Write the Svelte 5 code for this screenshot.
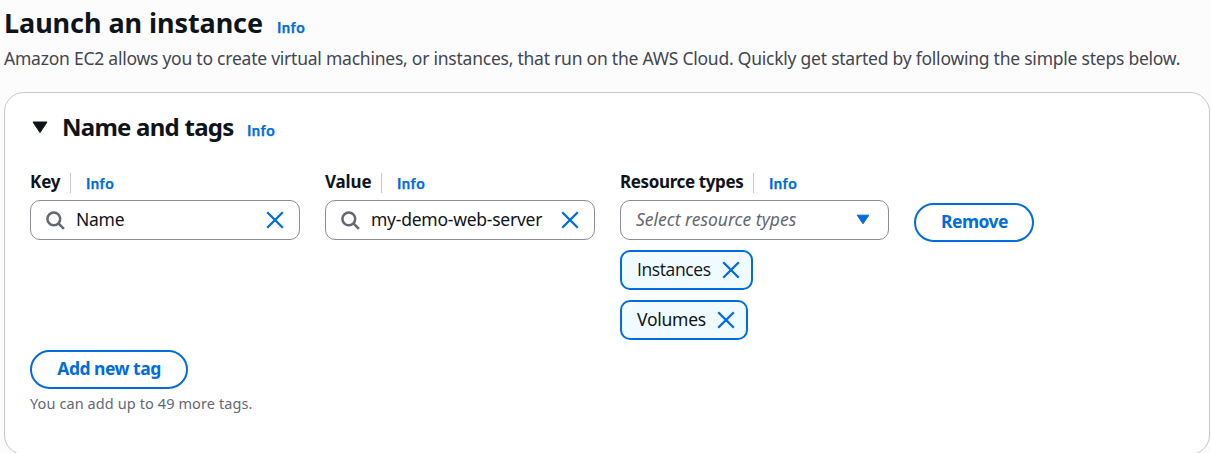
<script>
  const info = 'Info';
  const tokens = [
    { name: 'Instances', cls: 'instances' },
    { name: 'Volumes', cls: 'volumes' }
  ];
</script>

{#snippet cross()}
  <svg class="cross" width="18" height="18" viewBox="0 0 18 18" aria-hidden="true">
    <path d="M1.2 1.2 16.8 16.8M16.8 1.2 1.2 16.8" fill="none" stroke="#006ce0" stroke-width="2.3" />
  </svg>
{/snippet}

{#snippet search()}
  <svg class="search" width="19" height="19" viewBox="0 0 19 19" aria-hidden="true">
    <circle cx="7.8" cy="7.8" r="6.4" fill="none" stroke="#656871" stroke-width="2.5" />
    <path d="m12.2 12.2 5.7 5.7" fill="none" stroke="#656871" stroke-width="2.6" />
  </svg>
{/snippet}

{#snippet label(text, cls)}
  <div class="label"><b class={cls}>{text}</b><i class="rule"></i><a class="info">{info}</a></div>
{/snippet}

<main>
  <header>
    <h1><span>Launch an instance</span></h1>
    <a class="info">{info}</a>
  </header>
  <p class="intro"><span>Amazon EC2 allows you to create virtual machines, or instances, that run on the AWS Cloud. Quickly get started by following the simple steps below.</span></p>

  <section>
    <div class="title">
      <svg width="16" height="13" viewBox="0 0 16 13" aria-hidden="true"><path d="M1 1h14L8 11.6z" fill="#0f141a" stroke="#0f141a" stroke-linejoin="round" /></svg>
      <h2><span>Name and tags</span></h2>
      <a class="info">{info}</a>
    </div>

    <div class="grid">
      <div>
        {@render label('Key', 'key')}
        <div class="field">{@render search()}<span>Name</span>{@render cross()}</div>
      </div>
      <div>
        {@render label('Value', 'value')}
        <div class="field">{@render search()}<span>my-demo-web-server</span>{@render cross()}</div>
      </div>
      <div>
        {@render label('Resource types', 'types')}
        <div class="field select">
          <em>Select resource types</em>
          <svg width="14" height="12" viewBox="0 0 14 12" aria-hidden="true"><path d="M1.2 1.2h11.6L7 9.8z" fill="#006ce0" stroke="#006ce0" stroke-linejoin="round" /></svg>
        </div>
        {#each tokens as token}
          <div class="token {token.cls}"><span>{token.name}</span>{@render cross()}</div>
        {/each}
      </div>
      <button class="remove"><span>Remove</span></button>
    </div>

    <button class="add"><span>Add new tag</span></button>
    <p class="hint"><span>You can add up to 49 more tags.</span></p>
  </section>
</main>

<style>
  :global(body) { background: #fcfcfd; overflow: hidden; }
  main {
    box-sizing: border-box;
    height: 453px;
    padding: 6px 1px 0 4px;
    overflow: hidden;
    color: #0f141a;
    font: 17.5px/24px "Noto Sans", "Open Sans", sans-serif;
    font-stretch: 90%;
    letter-spacing: -0.25px;
    white-space: nowrap;
  }
  h1, h2, p { margin: 0; }
  header { display: flex; height: 34px; align-items: baseline; }
  h1 { width: 273px; font-size: 27px; line-height: 34px; font-weight: 700; letter-spacing: -0.07px; }
  .info { color: #006ce0; font-family: Lato, sans-serif; font-size: 14.8px; font-weight: 700; letter-spacing: 0.55px; -webkit-text-stroke: 0.25px #006ce0; }
  .intro { margin-top: 6px; color: #424650; height: 24px; letter-spacing: -0.235px; }
  section {
    box-sizing: border-box;
    height: 363px;
    margin-top: 22px;
    padding: 18px 25px 0;
    border: 1px solid #c6c6cd;
    border-radius: 20px;
    background: #fff;
  }
  .title { display: flex; height: 32px; align-items: baseline; }
  .title svg { margin: 0 14px 0 2px; position: relative; top: -2px; }
  h2 { width: 185px; font-size: 24px; line-height: 32px; font-weight: 700; letter-spacing: -0.75px; }
  .grid { display: grid; grid-template-columns: 270px 270px 269px 120px; column-gap: 25px; height: 180px; margin-top: 27px; align-items: start; }
  .label { display: flex; height: 24px; margin-bottom: 6px; align-items: center; }
  .label .info { padding-top: 2px; }
  .label b { font-weight: 700; font-size: 17px; letter-spacing: -0.37px; }
  .label .key, .label .value { letter-spacing: -0.15px; }
  .rule { width: 1px; height: 20px; margin: 2px 15px 0 9px; background: #c6c6cd; }
  .key { width: 31px; }
  .value { width: 47px; }
  .types { width: 124px; }
  .field { box-sizing: border-box; display: flex; height: 40px; align-items: center; border: 1px solid #8c8c94; border-radius: 10px; padding: 0 15px; }
  .field .search { margin-right: 11px; }
  .field .cross { margin-left: auto; }
  .field span, .field em { padding-bottom: 2px; }
  .token span { padding-bottom: 3px; }
  .select { padding-right: 18px; margin-bottom: 10px; }
  .select em { color: #656871; letter-spacing: 0; }
  .select svg { margin-left: auto; }
  .token { box-sizing: border-box; display: flex; height: 40px; align-items: center; justify-content: space-between; margin-bottom: 10px; padding: 0 11px 0 15px; border: 2px solid #006ce0; border-radius: 10px; background: #f0fbff; }
  .token .cross { margin-bottom: 1px; }
  .instances { width: 133px; font-family: "Open Sans", sans-serif; letter-spacing: -0.4px; }
  .volumes { width: 128px; }
  button { box-sizing: border-box; display: flex; height: 39px; padding: 0 0 3px; align-items: center; justify-content: center; border: 2px solid #006ce0; border-radius: 20px; color: #006ce0; background: #fff; font: inherit; font-weight: 700; letter-spacing: -0.5px; }
  .remove { width: 120px; margin-top: 33px; padding-left: 1px; }
  .add { width: 158px; }
  .hint { margin-top: 2px; color: #656871; font-size: 14.5px; letter-spacing: 0.1px; }
</style>
